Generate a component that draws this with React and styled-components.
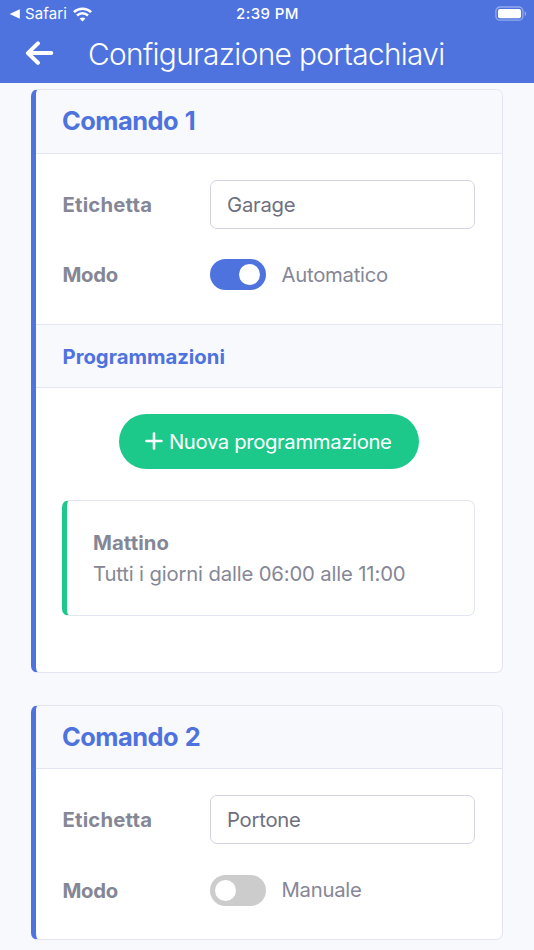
import React, { useState } from 'react';
import styled, { createGlobalStyle } from 'styled-components';

const theme = {
  primary: '#4e73df',
  success: '#1cc88a',
  background: '#f8f9fc',
  border: '#e3e6f0',
  inputBorder: '#d1d3e2',
  text: '#858796',
  inputText: '#6e707e'
};

const GlobalStyle = createGlobalStyle`
  * {
    box-sizing: border-box;
  }

  body {
    margin: 0;
    overflow: hidden;
    background-color: ${theme.background};
    color: ${theme.text};
    font-family: Inter, "Liberation Sans", sans-serif;
    font-size: 20.3px;
    line-height: 31px;
  }
`;

const Screen = styled.div`
  height: 950px;
  overflow: hidden;
`;

const Header = styled.header`
  height: 83px;
  background-color: ${theme.primary};
  color: #fff;
`;

const StatusBar = styled.div`
  display: grid;
  grid-template-columns: 1fr auto 1fr;
  align-items: center;
  height: 27px;
  padding: 0 8px 0 9px;
  font-size: 15px;
  line-height: 28px;
`;

const BackToApp = styled.div`
  display: flex;
  align-items: center;

  & > span {
    margin: 0 6.5px 0 5px;
    letter-spacing: 0.1px;
  }
`;

const Clock = styled.div`
  font-weight: 550;
  letter-spacing: 0.4px;
`;

const Battery = styled.svg`
  justify-self: end;
`;

const TitleBar = styled.div`
  display: flex;
  align-items: center;
  height: 54px;
  padding-left: 25px;
`;

const Title = styled.h1`
  margin: 0 0 0 34px;
  font-size: 29.8px;
  font-weight: 350;
  line-height: 55px;
  letter-spacing: -0.65px;
  white-space: nowrap;
`;

const Content = styled.main`
  padding: 6.4px 31px 0;
`;

const Card = styled.section`
  margin-bottom: 32px;
  border: 1px solid ${theme.border};
  border-left: 5px solid ${theme.primary};
  border-radius: 7px;
  background-color: #fff;
  overflow: hidden;
`;

const CardHeader = styled.h2`
  height: 63.2px;
  margin: 0;
  padding-left: 26px;
  border-bottom: 1px solid ${theme.border};
  background-color: ${theme.background};
  color: ${theme.primary};
  font-size: 25.4px;
  font-weight: 700;
  line-height: 62px;
  letter-spacing: -0.5px;
  word-spacing: 1px;
`;

const SectionHeader = styled.h3`
  height: 64px;
  margin: 0;
  padding-left: 26.5px;
  border: solid ${theme.border};
  border-width: 1px 0;
  background-color: ${theme.background};
  color: ${theme.primary};
  font-size: 20.3px;
  font-weight: 700;
  line-height: 64px;
  letter-spacing: 0;
`;

const Form = styled.div`
  padding: 26px 27px 33px 26px;
`;

const Row = styled.div`
  display: flex;
  align-items: center;
  height: 49px;

  & + & {
    height: 32px;
    margin-top: 30px;
  }
`;

const Label = styled.label`
  width: 148px;
  padding-left: 0.5px;
  font-weight: 700;
  letter-spacing: ${props => props.$tracking};
  line-height: 31px;
`;

const Input = styled.input`
  flex: 1;
  min-width: 0;
  height: 49px;
  padding: 0 16px;
  border: 1px solid ${theme.inputBorder};
  border-radius: 7px;
  background-color: #fff;
  color: ${theme.inputText};
  font: inherit;
  letter-spacing: -0.25px;
  outline: none;
`;

const Switch = styled.button`
  display: flex;
  align-items: center;
  justify-content: ${props => (props.$on ? 'flex-end' : 'flex-start')};
  width: 56px;
  height: 31px;
  padding: 0 ${props => (props.$on ? '6.5px' : '5px')};
  border: 0;
  border-radius: 16px;
  background-color: ${props => (props.$on ? theme.primary : '#ccc')};

  &::before {
    content: '';
    width: 21px;
    height: 21px;
    border-radius: 50%;
    background-color: #fff;
  }
`;

const Mode = styled.span`
  margin-left: 15.5px;
  letter-spacing: -0.25px;
  line-height: 34px;
`;

const Schedules = styled.div`
  display: flex;
  flex-direction: column;
  align-items: center;
  padding: 26px 27px 56.4px 26px;
`;

const AddButton = styled.button`
  display: flex;
  align-items: center;
  justify-content: center;
  width: 300px;
  height: 55px;
  padding: 0;
  border: 0;
  border-radius: 28px;
  background-color: ${theme.success};
  color: #fff;
  font: inherit;
  letter-spacing: -0.36px;
  white-space: nowrap;

  & > svg {
    margin-right: 5.5px;
  }
`;

const Schedule = styled.div`
  align-self: stretch;
  height: 116px;
  margin-top: 31px;
  padding: 26px 0 0 26px;
  border: 1px solid ${theme.border};
  border-left: 5px solid ${theme.success};
  border-radius: 7px;
  white-space: nowrap;
  letter-spacing: -0.15px;

  & > strong {
    display: block;
    font-weight: 700;
    letter-spacing: 0.1px;
  }
`;

const StatusIcons = () => (
  <svg width="19" height="15" viewBox="0 0 19 15" fill="none" stroke="#fff" strokeWidth="2.5">
    <path d="M.9 5.1C5.7.6 13.3.6 18.1 5.1" />
    <path d="M4 8.5c3.1-2.9 7.9-2.9 11 0" />
    <path d="M9.5 14.4 6.6 11.5c1.7-1.5 4.1-1.5 5.8 0Z" fill="#fff" stroke="none" />
  </svg>
);

const TopBar = () => (
  <Header>
    <StatusBar>
      <BackToApp>
        <svg width="11" height="10" viewBox="0 0 11 10">
          <path d="M.7 5 10.8.2v9.6Z" fill="#fff" />
        </svg>
        <span>Safari</span>
        <StatusIcons />
      </BackToApp>
      <Clock>2:39 PM</Clock>
      <Battery width="32" height="16" viewBox="0 0 32 16">
        <rect x="1.9" y="1" width="27" height="13.2" rx="4" fill="none" stroke="#fff" strokeOpacity=".4" strokeWidth="1.3" />
        <rect x="4" y="3" width="23" height="9.3" rx="2" fill="#fff" />
        <path d="M30.8 5.3c1.6.7 1.6 3.9 0 4.6Z" fill="#fff" fillOpacity=".5" />
      </Battery>
    </StatusBar>
    <TitleBar>
      <svg width="29" height="26" viewBox="0 0 29 26" fill="none" stroke="#fff" strokeWidth="4" strokeLinecap="round" strokeLinejoin="round">
        <path d="M12.9 2.4 2.9 12.1l10 9.7M3.3 12.1h23" />
      </svg>
      <Title>Configurazione portachiavi</Title>
    </TitleBar>
  </Header>
);

const Command = ({ name, label, automatic, children }) => {
  const [isAutomatic, setAutomatic] = useState(automatic);

  return (
    <Card>
      <CardHeader>{name}</CardHeader>
      <Form>
        <Row>
          <Label $tracking="0.2px">Etichetta</Label>
          <Input defaultValue={label} />
        </Row>
        <Row>
          <Label $tracking="-0.3px">Modo</Label>
          <Switch $on={isAutomatic} onClick={() => setAutomatic(!isAutomatic)} />
          <Mode>{isAutomatic ? 'Automatico' : 'Manuale'}</Mode>
        </Row>
      </Form>
      {children}
    </Card>
  );
};

const App = () => (
  <Screen>
    <GlobalStyle />
    <TopBar />
    <Content>
      <Command name="Comando 1" label="Garage" automatic>
        <SectionHeader>Programmazioni</SectionHeader>
        <Schedules>
          <AddButton>
            <svg width="18" height="18" viewBox="0 0 18 18" stroke="#fff" strokeWidth="2.6" strokeLinecap="round">
              <path d="M9 1.5v15M1.5 9h15" />
            </svg>
            Nuova programmazione
          </AddButton>
          <Schedule>
            <strong>Mattino</strong>
            Tutti i giorni dalle 06:00 alle 11:00
          </Schedule>
        </Schedules>
      </Command>
      <Command name="Comando 2" label="Portone" automatic={false} />
    </Content>
  </Screen>
);

export default App;
